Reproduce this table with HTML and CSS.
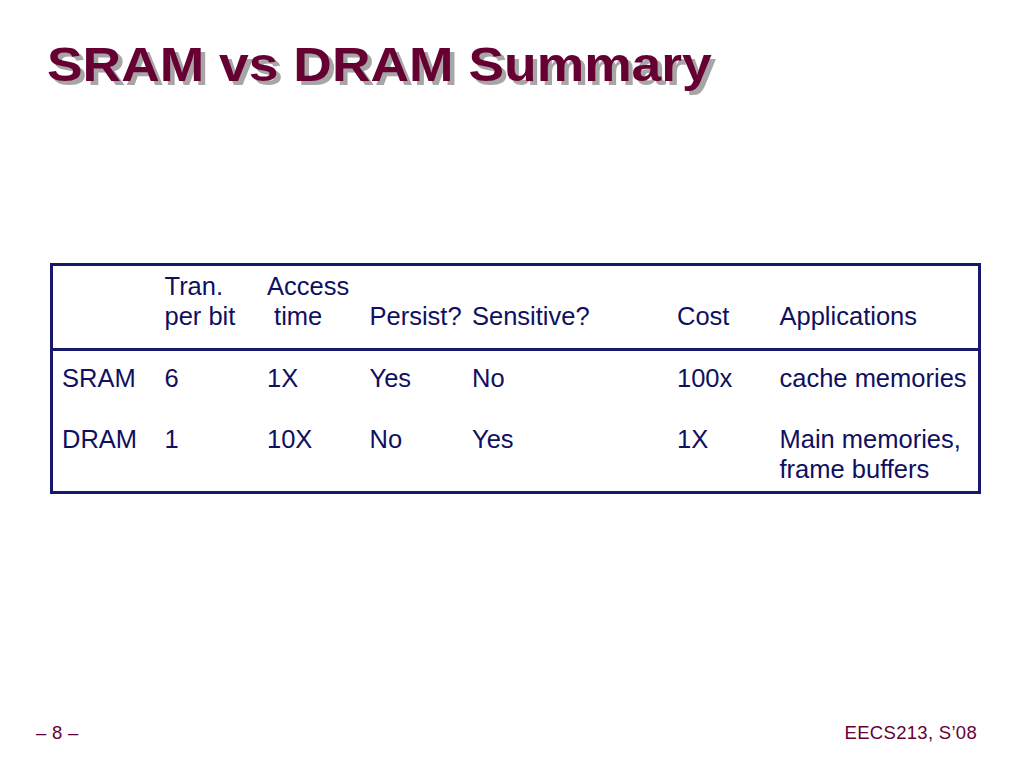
FILE: index.html
```html
<!DOCTYPE html>
<html>
<head>
<meta charset="utf-8">
<link rel="stylesheet" href="styles.css">
</head>
<body>
<div class="slide">
  <h1 class="title">SRAM vs DRAM Summary</h1>
  <div class="box">
    <div class="grid head">
      <div></div>
      <div>Tran.<br>per bit</div>
      <div>Access<br>&nbsp;time</div>
      <div><br>Persist?</div>
      <div><br>Sensitive?</div>
      <div><br>Cost</div>
      <div><br>Applications</div>
    </div>
    <div class="body">
      <div class="grid">
        <div>SRAM</div><div>6</div><div>1X</div><div>Yes</div><div>No</div><div>100x</div><div>cache memories</div>
      </div>
      <div class="grid">
        <div>DRAM</div><div>1</div><div>10X</div><div>No</div><div>Yes</div><div>1X</div><div>Main memories,<br>frame buffers</div>
      </div>
    </div>
  </div>
  <div class="footer">
    <span class="foot">– 8 –</span>
    <span class="foot">EECS213, S’08</span>
  </div>
</div>
</body>
</html>
```
FILE: styles.css
```css
html, body {
  margin: 0;
  padding: 0;
  background: #ffffff;
}
.slide {
  width: 1024px;
  height: 768px;
  display: flex;
  flex-direction: column;
  align-items: flex-start;
  font-family: "Liberation Sans", Arial, sans-serif;
  box-sizing: border-box;
  overflow: hidden;
}
.title {
  margin: 40px 0 0 47px;
  font-size: 49px;
  line-height: 49px;
  font-weight: bold;
  color: #660033;
  text-shadow: 4px 4px 0 #a6a6a6;
  transform: scaleX(1.09);
  transform-origin: left center;
  white-space: nowrap;
}
.box {
  margin: 174px 0 0 50px;
  width: 931px;
  border: 3px solid #17176b;
  box-sizing: border-box;
  color: #101060;
  font-size: 25.5px;
  line-height: 30px;
}
.grid {
  display: grid;
  grid-template-columns: 102.5px 102.5px 102.5px 102.5px 205px 102.5px 1fr;
  padding-left: 9px;
  white-space: nowrap;
}
.head {
  padding-top: 5px;
  padding-bottom: 17px;
  border-bottom: 3px solid #17176b;
  margin-right: -3px;
}
.body {
  display: flex;
  flex-direction: column;
  gap: 31px;
  padding: 12px 0 7px;
}
.footer {
  margin-top: auto;
  align-self: stretch;
  display: flex;
  justify-content: space-between;
  padding: 0 47px 25px 36px;
  color: #660033;
  font-size: 18.5px;
  line-height: 20px;
}
.foot {
  letter-spacing: 0.3px;
}
```
